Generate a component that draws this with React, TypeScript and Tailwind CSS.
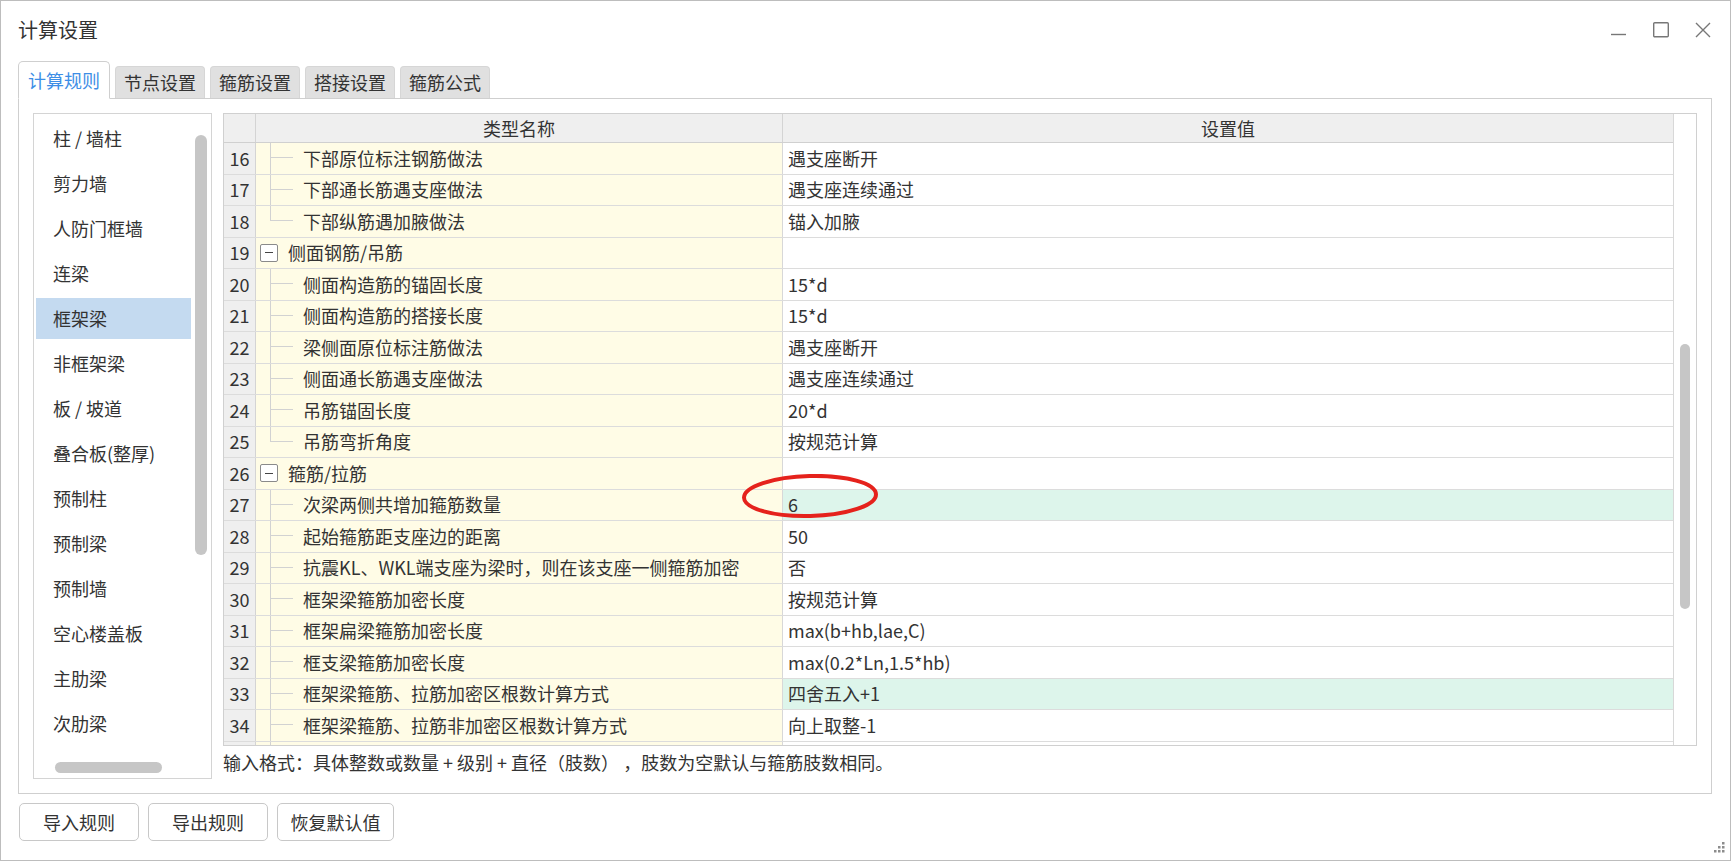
import React from "react";

type Row = {
  n: number;
  name: string;
  value?: string;
  kind: "child" | "last" | "group";
  hl?: boolean;
};

const rows: Row[] = [
  { n: 16, name: "下部原位标注钢筋做法", value: "遇支座断开", kind: "child" },
  { n: 17, name: "下部通长筋遇支座做法", value: "遇支座连续通过", kind: "child" },
  { n: 18, name: "下部纵筋遇加腋做法", value: "锚入加腋", kind: "last" },
  { n: 19, name: "侧面钢筋/吊筋", kind: "group" },
  { n: 20, name: "侧面构造筋的锚固长度", value: "15*d", kind: "child" },
  { n: 21, name: "侧面构造筋的搭接长度", value: "15*d", kind: "child" },
  { n: 22, name: "梁侧面原位标注筋做法", value: "遇支座断开", kind: "child" },
  { n: 23, name: "侧面通长筋遇支座做法", value: "遇支座连续通过", kind: "child" },
  { n: 24, name: "吊筋锚固长度", value: "20*d", kind: "child" },
  { n: 25, name: "吊筋弯折角度", value: "按规范计算", kind: "last" },
  { n: 26, name: "箍筋/拉筋", kind: "group" },
  { n: 27, name: "次梁两侧共增加箍筋数量", value: "6", kind: "child", hl: true },
  { n: 28, name: "起始箍筋距支座边的距离", value: "50", kind: "child" },
  { n: 29, name: "抗震KL、WKL端支座为梁时，则在该支座一侧箍筋加密", value: "否", kind: "child" },
  { n: 30, name: "框架梁箍筋加密长度", value: "按规范计算", kind: "child" },
  { n: 31, name: "框架扁梁箍筋加密长度", value: "max(b+hb,lae,C)", kind: "child" },
  { n: 32, name: "框支梁箍筋加密长度", value: "max(0.2*Ln,1.5*hb)", kind: "child" },
  { n: 33, name: "框架梁箍筋、拉筋加密区根数计算方式", value: "四舍五入+1", kind: "child", hl: true },
  { n: 34, name: "框架梁箍筋、拉筋非加密区根数计算方式", value: "向上取整-1", kind: "child" },
  { n: 35, name: "", value: "", kind: "child" },
];

const categories = [
  "柱 / 墙柱",
  "剪力墙",
  "人防门框墙",
  "连梁",
  "框架梁",
  "非框架梁",
  "板 / 坡道",
  "叠合板(整厚)",
  "预制柱",
  "预制梁",
  "预制墙",
  "空心楼盖板",
  "主肋梁",
  "次肋梁",
];

const tabs = ["计算规则", "节点设置", "箍筋设置", "搭接设置", "箍筋公式"];

function TreeLine({ last }: { last: boolean }) {
  return (
    <div className="flex h-full w-[47px] shrink-0">
      <div className="w-[14px]" />
      <div className="flex w-[23px] flex-col">
        <div className="h-1/2 border-b border-l border-[#d2d2d2]" />
        <div className={last ? "h-1/2" : "h-1/2 border-l border-[#d2d2d2]"} />
      </div>
    </div>
  );
}

function GridRow({ row }: { row: Row }) {
  return (
    <div className="flex h-[31.5px] shrink-0 border-b border-[#dcdcdc]">
      <div className="flex w-[32px] shrink-0 items-center justify-center border-r border-[#d4d4d4] bg-[#efefef]">
        {row.name || row.kind === "group" ? row.n : ""}
      </div>
      <div className="flex w-[527px] shrink-0 items-center border-r border-[#d8d8d8] bg-[#fffce6]">
        {row.kind === "group" ? (
          <>
            <div className="ml-[4px] flex h-[18px] w-[18px] items-center justify-center rounded-[2px] border border-[#8a8a8a] bg-white">
              <div className="h-px w-[8px] bg-[#444]" />
            </div>
            <span className="ml-[10px]">{row.name}</span>
          </>
        ) : (
          <>
            <TreeLine last={row.kind === "last"} />
            <span className="whitespace-nowrap">{row.name}</span>
          </>
        )}
      </div>
      <div
        className={
          row.hl
            ? "relative flex flex-1 items-center bg-[#ddf5eb] pl-[5px]"
            : "relative flex flex-1 items-center bg-white pl-[5px]"
        }
      >
        {row.value}
        {row.n === 27 && (
          <svg
            className="pointer-events-none absolute left-[-42px] top-[-16px] z-10"
            width="140"
            height="48"
            viewBox="0 0 140 48"
          >
            <ellipse cx="69" cy="22" rx="66" ry="20" fill="none" stroke="#e5221c" strokeWidth="4" transform="rotate(-1.5 69 22)" />
          </svg>
        )}
      </div>
    </div>
  );
}

export default function App() {
  return (
    <div
      className="relative flex h-[861px] w-full flex-col overflow-hidden border border-[#bdbdbd] bg-white text-[18px] text-[#333]"
      style={{ fontFamily: '"Noto Sans CJK SC", "Noto Sans", sans-serif' }}
    >
      {/* Title bar */}
      <div className="flex h-[58px] shrink-0 items-center justify-between pl-[17px] pr-[19px]">
        <span className="text-[20px] text-[#333]">计算设置</span>
        <div className="flex items-center gap-[26px]">
          <svg width="16" height="16" viewBox="0 0 16 16">
            <line x1="0" y1="12.5" x2="15" y2="12.5" stroke="#777" strokeWidth="1.4" />
          </svg>
          <svg width="16" height="16" viewBox="0 0 16 16">
            <rect x="0.7" y="0.7" width="14.6" height="14" rx="1" fill="none" stroke="#777" strokeWidth="1.4" />
          </svg>
          <svg width="16" height="16" viewBox="0 0 16 16">
            <path d="M1 1 L15 15 M15 1 L1 15" stroke="#777" strokeWidth="1.4" />
          </svg>
        </div>
      </div>

      {/* Tabs */}
      <div className="mt-[2px] flex items-end gap-[5px] pl-[17px]">
        {tabs.map((t, i) =>
          i === 0 ? (
            <div
              key={t}
              className="relative z-10 -mb-px flex h-[38px] w-[92px] items-center justify-center rounded-t-[5px] border border-b-white border-[#cfcfcf] bg-white text-[#3d8ee6]"
            >
              {t}
            </div>
          ) : (
            <div
              key={t}
              className="flex h-[32px] w-[90px] items-center justify-center rounded-t-[4px] border border-b-0 border-[#d6d6d6] bg-[#e0e0e0] text-[#333]"
            >
              {t}
            </div>
          )
        )}
      </div>

      {/* Panel */}
      <div className="ml-[17px] mr-[18px] flex h-[696px] shrink-0 gap-[11px] border border-[#cfcfcf] px-[14px] pb-[14px] pt-[14px]">
        {/* Category list */}
        <div className="relative flex w-[179px] shrink-0 flex-col gap-[4px] border border-[#d4d4d4] px-[2px] pt-[4px]">
          {categories.map((c, i) => (
            <div
              key={c}
              className={
                i === 4
                  ? "flex h-[41px] w-[155px] shrink-0 items-center bg-[#c4daf0] pl-[17px]"
                  : "flex h-[41px] w-[155px] shrink-0 items-center pl-[17px]"
              }
            >
              {c}
            </div>
          ))}
          <div className="absolute left-[161px] top-[21px] h-[420px] w-[12px] rounded-full bg-[#c6c6c6]" />
          <div className="absolute bottom-[5px] left-[21px] h-[11px] w-[107px] rounded-full bg-[#c6c6c6]" />
        </div>

        {/* Grid + hint */}
        <div className="flex flex-1 flex-col">
          <div className="flex h-[633px] shrink-0 border border-[#d0d0d0]">
            <div className="flex flex-1 flex-col overflow-hidden">
              <div className="flex h-[29px] shrink-0 border-b border-[#d0d0d0] bg-[#efefef]">
                <div className="w-[32px] shrink-0 border-r border-[#d4d4d4]" />
                <div className="flex w-[527px] shrink-0 items-center justify-center border-r border-[#d4d4d4]">
                  类型名称
                </div>
                <div className="flex flex-1 items-center justify-center">设置值</div>
              </div>
              {rows.map((r) => (
                <GridRow key={r.n} row={r} />
              ))}
            </div>
            <div className="flex w-[23px] shrink-0 justify-center border-l border-[#d8d8d8] bg-white pt-[230px]">
              <div className="h-[265px] w-[10px] rounded-full bg-[#c6c6c6]" />
            </div>
          </div>
          <div className="flex h-[38px] items-center whitespace-pre">
            输入格式：具体整数或数量 + 级别 + 直径（肢数） ，肢数为空默认与箍筋肢数相同。
          </div>
        </div>
      </div>

      {/* Buttons */}
      <div className="ml-[18px] mt-[9px] flex gap-[9px]">
        <button className="h-[38px] w-[120px] rounded-[5px] border border-[#c8c8c8] bg-white text-[18px] text-[#333]">
          导入规则
        </button>
        <button className="h-[38px] w-[120px] rounded-[5px] border border-[#c8c8c8] bg-white text-[18px] text-[#333]">
          导出规则
        </button>
        <button className="h-[38px] w-[117px] rounded-[5px] border border-[#c8c8c8] bg-white text-[18px] text-[#333]">
          恢复默认值
        </button>
      </div>

      {/* Resize grip */}
      <svg className="absolute bottom-[5px] right-[5px]" width="13" height="13" viewBox="0 0 13 13">
        <rect x="10" y="0" width="2.5" height="2.5" fill="#8c8c8c" />
        <rect x="6" y="4" width="2.5" height="2.5" fill="#8c8c8c" />
        <rect x="10" y="4" width="2.5" height="2.5" fill="#8c8c8c" />
        <rect x="2" y="8" width="2.5" height="2.5" fill="#8c8c8c" />
        <rect x="6" y="8" width="2.5" height="2.5" fill="#8c8c8c" />
        <rect x="10" y="8" width="2.5" height="2.5" fill="#8c8c8c" />
      </svg>
    </div>
  );
}
